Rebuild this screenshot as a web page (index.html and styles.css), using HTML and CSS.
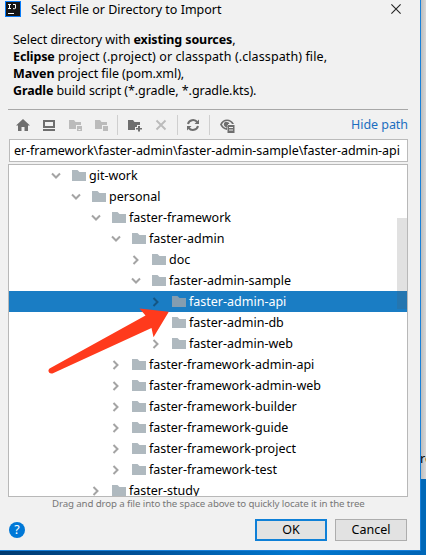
FILE: index.html
```
<!DOCTYPE html>
<html lang="en">
<head>
<meta charset="utf-8">
<title>Select File or Directory to Import</title>
<link rel="stylesheet" href="styles.css">
</head>
<body>
<svg class="defs" width="0" height="0">
  <symbol id="folder" viewBox="0 0 14 11"><path d="M0 0h5.500l2 2H14v9H0z"/></symbol>
  <symbol id="down" viewBox="0 0 10 10"><path d="M1 2.500l4 4 4-4" fill="none" stroke="currentColor" stroke-width="2"/></symbol>
  <symbol id="right" viewBox="0 0 10 10"><path d="M2.500 1l4 4-4 4" fill="none" stroke="currentColor" stroke-width="2"/></symbol>
</svg>
<main class="dialog">
  <header class="titlebar">
    <svg class="logo" width="16" height="16" viewBox="0 0 16 16"><path fill="#087cfa" d="M0 0h16v16H0z"/><path fill="#151515" d="M1 1h14v14H1z"/><path d="M3 3.500h3M4.500 3.500v4M3 7.500h3M8 3.500h2.500v3.500q0 .7-1 .7H8" fill="none" stroke="#fff"/><path d="M3 12.500h6" stroke="#fff"/></svg>
    <h1 class="title">Select File or Directory to Import</h1>
    <svg class="close" width="10" height="10" viewBox="0 0 10 10"><path d="M.4.400l9.200 9.200M9.600.400L.4 9.600" stroke="#222" stroke-width="1.100"/></svg>
  </header>
  <section class="intro">
    <p class="line l1">Select directory with <b>existing sources</b>,</p>
    <p class="line l2"><b>Eclipse</b> project (.project) or classpath (.classpath) file,</p>
    <p class="line l3"><b>Maven</b> project file (pom.xml),</p>
    <p class="line l4"><b>Gradle</b> build script (*.gradle, *.gradle.kts).</p>
  </section>
  <nav class="toolbar">
    <svg class="tool" width="16" height="16" viewBox="0 0 16 16"><path d="M8 2l7 6.500h-2V14H9.500v-4h-3v4H3V8.500H1z"/></svg>
    <svg class="tool" width="16" height="16" viewBox="0 0 16 16"><path d="M2 3h12v8H2zM4 5v4h8V5zM2 12h12v2H2z" fill-rule="evenodd"/></svg>
    <svg class="tool off" width="16" height="16" viewBox="0 0 16 16"><path d="M2 3h5l1.500 2H14v3H9v4H2zM10 9h5v5h-5zM11.500 12v1h2v-1z" fill-rule="evenodd"/></svg>
    <svg class="tool off" width="16" height="16" viewBox="0 0 16 16"><path d="M2 3h5l1.500 2H14v3H9v4H2zM10 9h5v5h-5z"/></svg>
    <i class="divider"></i>
    <svg class="tool" width="16" height="16" viewBox="0 0 16 16"><path d="M1 3h5l1.500 2H13v3h-3v2H8v3H1zM11 9h2v2h2v1.500h-2v2h-2v-2H9V11h2z"/></svg>
    <svg class="tool off" width="16" height="16" viewBox="0 0 16 16"><path d="M3.500 3.500l9 9M12.500 3.500l-9 9" stroke="#bbb" stroke-width="1.900"/></svg>
    <i class="divider tight"></i>
    <svg class="tool" width="16" height="16" viewBox="0 0 16 16"><path d="M3 7A5.200 5 0 0 1 12.300 5.200M13 9A5.200 5 0 0 1 3.700 10.800" fill="none" stroke="#6e6e6e" stroke-width="2"/><path d="M14 2.500V7H9.500zM2 13.500V9h4.500z"/></svg>
    <i class="divider"></i>
    <svg class="tool" width="16" height="16" viewBox="0 0 16 16"><path d="M8 9.500V13C4.500 12.500 2 10 1 7.500 2.500 4 5 2.500 8 2.500s5.500 1.500 7 4.500h-2C12 5.200 10 4 8 4S4 5 3 7.500c1 1.700 2 3 4 3.500zM8 5a2.500 2.500 0 0 1 2.500 2H9v2.200A2.500 2.500 0 1 1 8 5zM8.500 8h7v8h-7zM10 10v1h4v-1zM10 12.500v1h4v-1z" fill-rule="evenodd"/></svg>
    <a class="hide-path">Hide path</a>
  </nav>
  <div class="path"><span class="path-text">er-framework\faster-admin\faster-admin-sample\faster-admin-api</span></div>
  <div class="tree">
    <div class="rows">
      <div class="row d0"><svg class="arrow"><use href="#down"/></svg><svg class="folder"><use href="#folder"/></svg><span>git-work</span></div>
      <div class="row d1"><svg class="arrow"><use href="#down"/></svg><svg class="folder"><use href="#folder"/></svg><span>personal</span></div>
      <div class="row d2"><svg class="arrow"><use href="#down"/></svg><svg class="folder"><use href="#folder"/></svg><span>faster-framework</span></div>
      <div class="row d3"><svg class="arrow"><use href="#down"/></svg><svg class="folder"><use href="#folder"/></svg><span>faster-admin</span></div>
      <div class="row d4"><svg class="arrow"><use href="#right"/></svg><svg class="folder"><use href="#folder"/></svg><span>doc</span></div>
      <div class="row d4"><svg class="arrow"><use href="#down"/></svg><svg class="folder"><use href="#folder"/></svg><span>faster-admin-sample</span></div>
      <div class="row d5 selected"><svg class="arrow"><use href="#right"/></svg><svg class="folder"><use href="#folder"/></svg><span>faster-admin-api</span></div>
      <div class="row d5"><svg class="arrow"></svg><svg class="folder"><use href="#folder"/></svg><span>faster-admin-db</span></div>
      <div class="row d5"><svg class="arrow"><use href="#right"/></svg><svg class="folder"><use href="#folder"/></svg><span>faster-admin-web</span></div>
      <div class="row d3"><svg class="arrow"><use href="#right"/></svg><svg class="folder"><use href="#folder"/></svg><span>faster-framework-admin-api</span></div>
      <div class="row d3"><svg class="arrow"><use href="#right"/></svg><svg class="folder"><use href="#folder"/></svg><span>faster-framework-admin-web</span></div>
      <div class="row d3"><svg class="arrow"><use href="#right"/></svg><svg class="folder"><use href="#folder"/></svg><span>faster-framework-builder</span></div>
      <div class="row d3"><svg class="arrow"><use href="#right"/></svg><svg class="folder"><use href="#folder"/></svg><span>faster-framework-guide</span></div>
      <div class="row d3"><svg class="arrow"><use href="#right"/></svg><svg class="folder"><use href="#folder"/></svg><span>faster-framework-project</span></div>
      <div class="row d3"><svg class="arrow"><use href="#right"/></svg><svg class="folder"><use href="#folder"/></svg><span>faster-framework-test</span></div>
      <div class="row d2"><svg class="arrow"><use href="#right"/></svg><svg class="folder"><use href="#folder"/></svg><span>faster-study</span></div>
    </div>
    <div class="scrollbar"></div>
    <svg class="pointer" width="124" height="68" viewBox="0 0 124 68"><path fill="#ff3a1c" d="M2 60.300L97.500 7.500 91.500.500 120.800 3.700 105.500 29.300 103.500 20 5.500 65C1.500 67-1.500 62.500 2 60.300z"/></svg>
  </div>
  <p class="hint">Drag and drop a file into the space above to quickly locate it in the tree</p>
  <footer class="actions">
    <span class="help">?</span>
    <button class="button primary">OK</button>
    <button class="button">Cancel</button>
  </footer>
</main>
<aside class="behind"><div class="window">re</div></aside>
</body>
</html>
```
FILE: styles.css
```
* { box-sizing: border-box; }
body {
  margin: 0;
  width: 426px;
  height: 555px;
  overflow: hidden;
  display: flex;
  align-items: flex-start;
  background: linear-gradient(90deg, #003a70, #00529a 35%, #0078d0 70%, #0064b5);
  font: 12.5px/17px "Noto Sans", sans-serif;
  color: #000;
}
p, h1 { margin: 0; font-size: inherit; font-weight: 400; }
.defs { position: absolute; }
.dialog {
  width: 421px;
  height: 551px;
  flex: none;
  background: #f1f1f1;
  border-right: 1px solid #1880d8;
  border-bottom: 1px solid #1880d8;
  white-space: nowrap;
}
.titlebar { display: flex; align-items: center; height: 19px; padding: 0 19px 1px 5px; }
.title { margin-left: 10px; letter-spacing: 0; }
.close { margin-left: auto; }
.intro { height: 91px; margin: 0 12px 0 8px; padding: 12px 0 0 5px; border-bottom: 1px solid #a8a8a8; }
.line b { letter-spacing: -.12px; }
.l1 { letter-spacing: -.08px; }
.l2 { letter-spacing: .1px; }
.l3, .l4 { letter-spacing: -.06px; }
.toolbar { display: flex; align-items: center; height: 29px; padding: 0 12px 0 15px; }
.tool { fill: #6e6e6e; margin-right: 10px; flex: none; }
.off { fill: #bbb; }
.divider { width: 1px; height: 20px; background: #cfcfcf; margin: 0 9px 0 -2px; }
.divider.tight { margin-right: 7px; }
.hide-path { margin-left: auto; color: #1b6ebf; letter-spacing: -.05px; }
.path {
  width: 399px;
  height: 23px;
  margin-left: 9px;
  padding: 0 6px 0 4px;
  display: flex;
  align-items: center;
  background: #fff;
  border: 1px solid #bbb;
  overflow: hidden;
}
.path-text { letter-spacing: -.05px; }
.tree {
  position: relative;
  width: 400px;
  height: 333px;
  margin: 2px 0 0 8px;
  border: 1px solid #b8b8b8;
  background: #fff;
}
.rows { height: 331px; overflow: hidden; }
.row { display: flex; align-items: center; height: 21px; }
.arrow { width: 10px; height: 10px; margin-right: 11px; color: #a4a4a4; flex: none; }
.folder { width: 14px; height: 11px; margin-right: 3px; fill: #afb9bf; flex: none; }
.d0 { padding-left: 42px; }
.d1 { padding-left: 62px; }
.d2 { padding-left: 82px; }
.d3 { padding-left: 102px; }
.d4 { padding-left: 122px; }
.d5 { padding-left: 142px; }
.selected { background: #1a7dc4; color: #fff; }
.selected .arrow { color: #145583; }
.selected .folder { fill: #849db0; }
.scrollbar { position: absolute; right: 0; top: 53px; width: 10px; height: 91px; background: rgba(90,90,90,.18); }
.pointer { position: absolute; left: 39px; top: 143px; }
.hint { height: 14px; padding-left: 52px; font-size: 9.7px; line-height: 14px; letter-spacing: -.11px; color: #777; }
.actions { display: flex; align-items: center; height: 22px; margin-top: 8px; padding: 0 13px 0 9px; gap: 8px; }
.help { width: 16px; height: 16px; margin-right: auto; border-radius: 50%; background: #0078d7; color: #fff; text-align: center; line-height: 16px; }
.button { width: 72px; height: 22px; padding: 0; border: 1px solid #adadad; background: #e2e2e2; font: inherit; line-height: 18px; color: #000; }
.primary { border: 2px solid #0f80d7; }
.behind { width: 5px; height: 555px; background: #0068b8; overflow: hidden; }
.window { width: 5px; height: 479px; padding-top: 450px; background: linear-gradient(90deg, #bdbdbd, #d8d8d8); text-indent: -1px; }
```
